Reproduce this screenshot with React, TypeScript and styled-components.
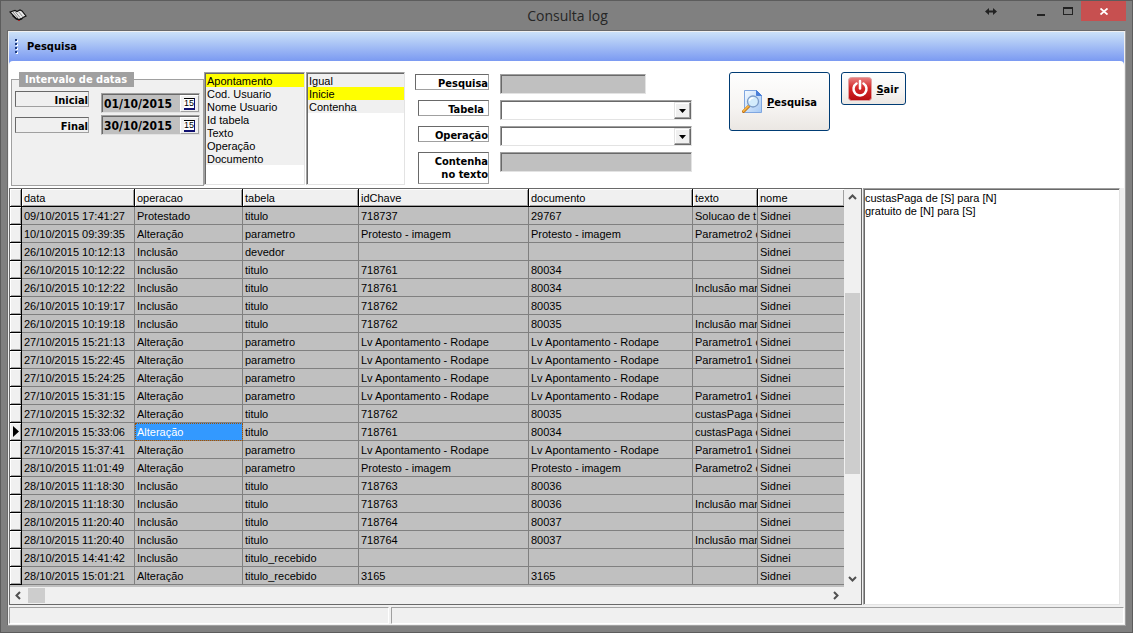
import React from 'react';
import styled, { createGlobalStyle, css } from 'styled-components';

const GlobalStyle = createGlobalStyle`
  * { box-sizing: border-box; }
  body {
    margin: 0;
    font-family: "Liberation Sans", Arial, sans-serif;
    font-size: 11px;
    line-height: 13px;
    color: #000;
  }
  button, input, select, textarea { font: inherit; color: inherit; margin: 0; }
`;

const boldText = css`
  font-family: "DejaVu Sans Condensed", "DejaVu Sans", sans-serif;
  font-weight: bold;
`;

const sunken = css`
  border: 1px solid;
  border-color: #a0a0a0 #e3e3e3 #e3e3e3 #a0a0a0;
  box-shadow: inset 1px 1px 0 #696969;
`;

const Window = styled.div`
  display: flex;
  flex-direction: column;
  min-height: 100vh;
  background: #808080;
  border: 1px solid #5c5c5c;
`;

const TitleBar = styled.header`
  display: grid;
  grid-template-columns: 1fr auto 1fr;
  height: 29px;
  padding: 0 6px 0 8px;
`;

const AppIcon = styled.div`
  padding-top: 8px;
`;

const Title = styled.h1`
  margin: 0;
  padding-top: 5px;
  font: 14px/20px "Open Sans", sans-serif;
  color: #262626;
`;

const WindowButtons = styled.div`
  display: flex;
  justify-content: flex-end;
  align-items: flex-start;
`;

const WindowButton = styled.button<{ $width: number; $close?: boolean }>`
  display: flex;
  align-items: center;
  justify-content: center;
  width: ${p => p.$width}px;
  height: 20px;
  padding: 0;
  border: 0;
  background: ${p => (p.$close ? '#c75050' : 'transparent')};
`;

const Client = styled.main`
  display: flex;
  flex-direction: column;
  flex: 1;
  margin: 0 6px 6px;
  padding: 1px;
  border: 1px solid #696969;
  border-right-color: #a0a0a0;
  border-bottom-color: #a0a0a0;
  background: #f0f0f0;
`;

const SearchSection = styled.section`
  background: #7b9ef2;
`;

const SectionHeader = styled.div`
  display: flex;
  align-items: center;
  gap: 9px;
  height: 29px;
  padding-left: 6px;
  background: linear-gradient(#cbe1f8, #7b9af2);
`;

const SectionTitle = styled.h2`
  ${boldText}
  margin: 0;
  font-size: 11px;
`;

const SearchPanel = styled.div`
  display: flex;
  align-items: flex-start;
  padding: 11px 2px 2px;
  border-radius: 4px 4px 0 0;
  background: #fff;
`;

const DateGroup = styled.fieldset`
  display: block;
  flex: none;
  width: 193px;
  height: 114px;
  min-width: 0;
  margin: 0;
  padding: 0 3px;
  border: 1px solid #a0a0a0;
  background: #f0f0f0;
`;

const DateLegend = styled.legend`
  ${boldText}
  margin-left: 4px;
  padding: 1px 7px 0 6px;
  font-size: 11px;
  line-height: 14px;
  color: #fff;
  background: #a0a0a0;
`;

const DateRows = styled.div`
  display: flex;
  justify-content: space-between;
  padding-top: 4px;
`;

const Column = styled.div<{ $gap: number; $top?: number }>`
  display: flex;
  flex-direction: column;
  gap: ${p => p.$gap}px;
  padding-top: ${p => p.$top ?? 0}px;
`;

const FieldLabel = styled.label<{ $width: number; $inset?: number; $lines?: number }>`
  ${boldText}
  justify-self: end;
  width: ${p => p.$width}px;
  height: ${p => (p.$lines === 2 ? 32 : 16)}px;
  padding: 2px ${p => p.$inset ?? 0}px 0 0;
  border: 1px solid;
  border-color: #696969 #a0a0a0 #a0a0a0 #696969;
  font-size: 11px;
  text-align: right;
`;

const DateBox = styled.div`
  ${sunken}
  display: flex;
  width: 99px;
  height: 20px;
  padding: 1px 0 0 1px;
  background: #c0c0c0;
`;

const DateInput = styled.input`
  ${boldText}
  flex: 1;
  min-width: 0;
  padding: 1px 0 0 1px;
  border: 0;
  outline: 0;
  background: transparent;
  font-size: 12px;
`;

const CalendarButton = styled.button`
  display: flex;
  align-items: center;
  justify-content: center;
  width: 19px;
  padding: 0;
  border: 1px solid;
  border-color: #fff #a0a0a0 #a0a0a0 #fff;
  background: #f0f0f0;
`;

const CalendarFace = styled.span`
  border-top: 1px solid #000;
  border-right: 1px solid #101070;
  border-bottom: 2px solid #101070;
  background: #fff;
  font-size: 9px;
  line-height: 9px;
`;

const ListBox = styled.select<{ $width: number }>`
  ${sunken}
  flex: none;
  width: ${p => p.$width}px;
  height: 113px;
  margin-right: 1px;
  padding: 1px 0 0 1px;
  border-radius: 0;
  outline: 0;
  overflow: hidden;
  background: #fff;

  option {
    height: 13px;
    min-height: 13px;
    padding: 1px 1px 0;
    line-height: 12px;
    color: #000;
    background: #f0f0f0;
  }
  option:checked {
    color: #000;
    background: #ff0 linear-gradient(#ff0, #ff0);
  }
`;

const FilterGrid = styled.div`
  display: grid;
  grid-template-columns: 74px 192px;
  grid-template-rows: 20px 20px 20px auto;
  column-gap: 11px;
  row-gap: 6px;
  align-items: start;
  margin: 2px 37px 0 9px;
`;

const FilterInput = styled.input<{ $width: number }>`
  ${sunken}
  width: ${p => p.$width}px;
  height: 20px;
  padding: 0 3px;
  outline: 0;
  border-radius: 0;
  background: #c0c0c0;
`;

const SelectBox = styled.div`
  position: relative;
  height: 20px;
`;

const FilterSelect = styled.select`
  ${sunken}
  appearance: none;
  width: 100%;
  height: 20px;
  border-radius: 0;
  outline: 0;
  background: #fff;
`;

const SelectArrow = styled.span`
  position: absolute;
  top: 2px;
  right: 1px;
  display: flex;
  align-items: center;
  justify-content: center;
  width: 17px;
  height: 17px;
  border: 1px solid;
  border-color: #e3e3e3 #696969 #696969 #e3e3e3;
  box-shadow: inset -1px -1px 0 #a0a0a0, inset 1px 1px 0 #fff;
  background: #f0f0f0;
  pointer-events: none;
`;

const ActionButton = styled.button<{ $large?: boolean }>`
  ${boldText}
  display: flex;
  flex: none;
  align-items: center;
  justify-content: center;
  gap: 4px;
  width: ${p => (p.$large ? 101 : 65)}px;
  height: ${p => (p.$large ? 59 : 33)}px;
  margin-right: 11px;
  padding: 0;
  border: 1px solid #003c74;
  border-radius: 3px;
  background: linear-gradient(#fefefe, #f6f4f2 60%, #ebe7e3);
  font-size: 11px;
`;

const ActionText = styled.span`
  padding-top: 2px;
`;

const Results = styled.section`
  display: grid;
  flex: 1;
  grid-template-columns: minmax(0, 853fr) minmax(0, 257fr);
  column-gap: 1px;
  padding-right: 4px;
`;

const GridPane = styled.div`
  display: grid;
  grid-template-columns: minmax(0, 1fr) 17px;
  grid-template-rows: 1fr 17px;
  min-width: 0;
  border: 1px solid #696969;
  background: #f0f0f0;
`;

const TableArea = styled.div`
  min-width: 0;
  padding-bottom: 2px;
  background: #c0c0c0;
`;

const Table = styled.table`
  width: 100%;
  table-layout: fixed;
  border-collapse: separate;
  border-spacing: 0;
`;

const Col = styled.col<{ $width?: number }>`
  width: ${p => (p.$width ? `${p.$width}px` : 'auto')};
`;

const HeadCell = styled.th<{ $last?: boolean }>`
  height: 18px;
  padding: 1px 2px 0;
  border-bottom: 1px solid #000;
  border-right: ${p => (p.$last ? '0' : '1px solid #000')};
  box-shadow: inset 1px 1px 0 #fff, inset -1px -1px 0 #a0a0a0;
  background: #f0f0f0;
  font-weight: normal;
  line-height: 16px;
  text-align: left;
`;

const MarkerCell = styled.th`
  height: 18px;
  padding: 0;
  border-right: 1px solid #000;
  border-bottom: 1px solid #000;
  box-shadow: inset 1px 1px 0 #fff, inset -1px -1px 0 #a0a0a0;
  background: #f0f0f0;
`;

const MarkerIcon = styled.svg`
  display: block;
  margin-left: 3px;
`;

const Cell = styled.td<{ $selected?: boolean; $last?: boolean }>`
  height: 18px;
  padding: 1px 0 0 2px;
  border-right: ${p => (p.$last ? '0' : '1px solid #808080')};
  border-bottom: 1px solid #808080;
  line-height: 16px;
  ${p =>
    p.$selected &&
    css`
      color: #fff;
      background: #3399ff;
      outline: 1px dotted #a05000;
      outline-offset: -1px;
    `}
`;

const CellText = styled.span`
  display: block;
  overflow: hidden;
  white-space: nowrap;
`;

const Scrollbar = styled.div<{ $vertical?: boolean }>`
  display: flex;
  flex-direction: ${p => (p.$vertical ? 'column' : 'row')};
  background: #f0f0f0;
`;

const ScrollButton = styled.button`
  display: flex;
  align-items: center;
  justify-content: center;
  width: 17px;
  height: 17px;
  padding: 0;
  border: 0;
  background: transparent;
`;

const Track = styled.div<{ $share: number }>`
  flex: ${p => p.$share} 1 0;
`;

const Thumb = styled.div<{ $share: number }>`
  flex: ${p => p.$share} 1 0;
  margin: 1px;
  background: #cdcdcd;
`;

const Detail = styled.textarea`
  ${sunken}
  width: 100%;
  height: 100%;
  padding: 3px 1px;
  border-radius: 0;
  outline: 0;
  resize: none;
  background: #fff;
`;

const StatusBar = styled.footer`
  display: flex;
  gap: 2px;
  height: 19px;
  padding-top: 2px;
`;

const StatusPanel = styled.div<{ $width?: number }>`
  flex: ${p => (p.$width ? `0 0 ${p.$width}px` : '1')};
  border: 1px solid;
  border-color: #a0a0a0 #fff #fff #a0a0a0;
`;

const columns: { name: string; width?: number }[] = [
  { name: 'data', width: 113 },
  { name: 'operacao', width: 108 },
  { name: 'tabela', width: 116 },
  { name: 'idChave', width: 170 },
  { name: 'documento', width: 164 },
  { name: 'texto', width: 65 },
  { name: 'nome' },
];

const rodape = 'Lv Apontamento - Rodape';
const imagem = 'Protesto - imagem';

const rows: string[][] = [
  ['09/10/2015 17:41:27', 'Protestado', 'titulo', '718737', '29767', 'Solucao de t'],
  ['10/10/2015 09:39:35', 'Alteração', 'parametro', imagem, imagem, 'Parametro2 c'],
  ['26/10/2015 10:12:13', 'Inclusão', 'devedor', '', '', ''],
  ['26/10/2015 10:12:22', 'Inclusão', 'titulo', '718761', '80034', ''],
  ['26/10/2015 10:12:22', 'Inclusão', 'titulo', '718761', '80034', 'Inclusão mar'],
  ['26/10/2015 10:19:17', 'Inclusão', 'titulo', '718762', '80035', ''],
  ['26/10/2015 10:19:18', 'Inclusão', 'titulo', '718762', '80035', 'Inclusão mar'],
  ['27/10/2015 15:21:13', 'Alteração', 'parametro', rodape, rodape, 'Parametro1 c'],
  ['27/10/2015 15:22:45', 'Alteração', 'parametro', rodape, rodape, 'Parametro1 c'],
  ['27/10/2015 15:24:25', 'Alteração', 'parametro', rodape, rodape, ''],
  ['27/10/2015 15:31:15', 'Alteração', 'parametro', rodape, rodape, 'Parametro1 c'],
  ['27/10/2015 15:32:32', 'Alteração', 'titulo', '718762', '80035', 'custasPaga c'],
  ['27/10/2015 15:33:06', 'Alteração', 'titulo', '718761', '80034', 'custasPaga c'],
  ['27/10/2015 15:37:41', 'Alteração', 'parametro', rodape, rodape, 'Parametro1 c'],
  ['28/10/2015 11:01:49', 'Alteração', 'parametro', imagem, imagem, 'Parametro2 c'],
  ['28/10/2015 11:18:30', 'Inclusão', 'titulo', '718763', '80036', ''],
  ['28/10/2015 11:18:30', 'Inclusão', 'titulo', '718763', '80036', 'Inclusão mar'],
  ['28/10/2015 11:20:40', 'Inclusão', 'titulo', '718764', '80037', ''],
  ['28/10/2015 11:20:40', 'Inclusão', 'titulo', '718764', '80037', 'Inclusão mar'],
  ['28/10/2015 14:41:42', 'Inclusão', 'titulo_recebido', '', '', ''],
  ['28/10/2015 15:01:21', 'Alteração', 'titulo_recebido', '3165', '3165', ''],
].map(r => [...r, 'Sidnei']);

const currentRow = 12;

const BookIcon = () => (
  <svg width="18" height="13" viewBox="0 0 18 13" aria-hidden="true">
    <path d="M1 3l5-1.500 2 1 3-1.500 2 1 4 5-3 1.500-1 1-3 1-3-1z" fill="#e8e8e8" stroke="#111" strokeWidth="1.200" />
    <path d="M4 3l5 6M6 2.500l5 6M9.500 2.500l4 5" stroke="#888" strokeWidth="1" fill="none" />
    <path d="M3.500 6.500l3.500 3 3 1.500 3-1.500" stroke="#111" strokeWidth="1.500" fill="none" />
    <path d="M9 11.500h2" stroke="#a02020" />
  </svg>
);

const Grip = () => (
  <svg width="3" height="15" viewBox="0 0 3 15" aria-hidden="true">
    {[0, 4, 8, 12].map(y => (
      <g key={y}>
        <rect x="1" y={y + 1} width="2" height="2" fill="#fff" />
        <rect x="0" y={y} width="2" height="2" fill="#1c3c80" />
      </g>
    ))}
  </svg>
);

const MagnifierIcon = () => (
  <svg width="21" height="24" viewBox="0 0 21 24" aria-hidden="true">
    <defs>
      <linearGradient id="sheet" x1="0" y1="0" x2="1" y2="1">
        <stop offset="0" stopColor="#f4faff" />
        <stop offset="1" stopColor="#a4c8f4" />
      </linearGradient>
    </defs>
    <path d="M2.500 .5h12l5 5v17h-17z" fill="url(#sheet)" stroke="#7fa6e0" />
    <path d="M14.500 .5v5h5z" fill="#4a7fd8" stroke="#4a7fd8" />
    <path d="M1.500 21.500l5.500-5.500" stroke="#b86a10" strokeWidth="3" strokeLinecap="round" />
    <path d="M1.500 21l5-5" stroke="#f4b040" strokeWidth="2" strokeLinecap="round" />
    <circle cx="11" cy="11.500" r="5.500" fill="#d4ecfc" stroke="#7c9cc8" strokeWidth="1.300" />
    <path d="M7.500 11a3.500 3.500 0 0 1 4-3" stroke="#fff" strokeWidth="1.500" fill="none" />
  </svg>
);

const PowerIcon = () => (
  <svg width="24" height="24" viewBox="0 0 24 24" aria-hidden="true">
    <defs>
      <linearGradient id="power" x1="0" y1="0" x2="0" y2="1">
        <stop offset="0" stopColor="#e88080" />
        <stop offset=".45" stopColor="#d42a2a" />
        <stop offset="1" stopColor="#b80c10" />
      </linearGradient>
    </defs>
    <rect x=".5" y=".5" width="23" height="23" rx="3" fill="url(#power)" stroke="#e0a0a0" />
    <path d="M8.500 6.500a6.500 6.500 0 1 0 7 0" stroke="#fff" strokeWidth="2.500" fill="none" strokeLinecap="round" />
    <path d="M12 4v7.500" stroke="#fff" strokeWidth="2.500" strokeLinecap="round" />
  </svg>
);

const Chevron = ({ angle }: { angle: number }) => (
  <svg width="9" height="9" viewBox="0 0 9 9" aria-hidden="true">
    <path d="M1 6l3.500-3.500L8 6" transform={`rotate(${angle} 4.5 4.5)`} fill="none" stroke="#505050" strokeWidth="2" />
  </svg>
);

const DropArrow = () => (
  <svg width="7" height="4" viewBox="0 0 7 4" aria-hidden="true">
    <path d="M0 0h7L3.500 4z" fill="#000" />
  </svg>
);

const DateField = ({ id, value }: { id: string; value: string }) => (
  <DateBox>
    <DateInput id={id} defaultValue={value} />
    <CalendarButton type="button" aria-label="Calendário">
      <CalendarFace>15</CalendarFace>
    </CalendarButton>
  </DateBox>
);

const ComboBox = ({ id }: { id: string }) => (
  <SelectBox>
    <FilterSelect id={id}>
      <option value="" />
    </FilterSelect>
    <SelectArrow>
      <DropArrow />
    </SelectArrow>
  </SelectBox>
);

const OptionList = ({ label, width, selected, options }: { label: string; width: number; selected: string; options: string[] }) => (
  <ListBox aria-label={label} $width={width} size={8} defaultValue={selected}>
    {options.map(o => (
      <option key={o}>{o}</option>
    ))}
  </ListBox>
);

export default function App() {
  return (
    <>
      <GlobalStyle />
      <Window>
        <TitleBar>
          <AppIcon>
            <BookIcon />
          </AppIcon>
          <Title>Consulta log</Title>
          <WindowButtons>
            <WindowButton $width={72} aria-label="Redimensionar">
              <svg width="12" height="7" viewBox="0 0 12 7">
                <path d="M0 3.500L4 0v2.500h4V0l4 3.500L8 7V4.500H4V7z" fill="#222" />
              </svg>
            </WindowButton>
            <WindowButton $width={28} aria-label="Minimizar">
              <svg width="8" height="9" viewBox="0 0 8 9">
                <path d="M0 7h8v2H0z" fill="#222" />
              </svg>
            </WindowButton>
            <WindowButton $width={26} aria-label="Maximizar">
              <svg width="10" height="8" viewBox="0 0 10 8">
                <path d="M0 0h10v8H0zM1 2v5h8V2z" fill="#222" fillRule="evenodd" />
              </svg>
            </WindowButton>
            <WindowButton $width={45} $close aria-label="Fechar">
              <svg width="8" height="7" viewBox="0 0 8 7">
                <path d="M.5 .5l7 6M7.500 .5l-7 6" stroke="#fff" strokeWidth="1.800" />
              </svg>
            </WindowButton>
          </WindowButtons>
        </TitleBar>

        <Client>
          <SearchSection>
            <SectionHeader>
              <Grip />
              <SectionTitle>Pesquisa</SectionTitle>
            </SectionHeader>
            <SearchPanel>
              <DateGroup>
                <DateLegend>Intervalo de datas</DateLegend>
                <DateRows>
                  <Column $gap={10}>
                    <FieldLabel htmlFor="inicial" $width={74}>Inicial</FieldLabel>
                    <FieldLabel htmlFor="final" $width={74}>Final</FieldLabel>
                  </Column>
                  <Column $gap={2} $top={2}>
                    <DateField id="inicial" value="01/10/2015" />
                    <DateField id="final" value="30/10/2015" />
                  </Column>
                </DateRows>
              </DateGroup>
              <OptionList
                label="Campo"
                width={101}
                selected="Apontamento"
                options={['Apontamento', 'Cod. Usuario', 'Nome Usuario', 'Id tabela', 'Texto', 'Operação', 'Documento']}
              />
              <OptionList label="Critério" width={99} selected="Inicie" options={['Igual', 'Inicie', 'Contenha']} />
              <FilterGrid>
                <FieldLabel htmlFor="pesquisa" $width={74}>Pesquisa</FieldLabel>
                <FilterInput id="pesquisa" $width={146} />
                <FieldLabel htmlFor="tabela" $width={71} $inset={4}>Tabela</FieldLabel>
                <ComboBox id="tabela" />
                <FieldLabel htmlFor="operacao" $width={71}>Operação</FieldLabel>
                <ComboBox id="operacao" />
                <FieldLabel htmlFor="contenha" $width={71} $lines={2}>Contenha no texto</FieldLabel>
                <FilterInput id="contenha" $width={192} />
              </FilterGrid>
              <ActionButton type="button" $large>
                <MagnifierIcon />
                <ActionText><u>P</u>esquisa</ActionText>
              </ActionButton>
              <ActionButton type="button">
                <PowerIcon />
                <ActionText><u>S</u>air</ActionText>
              </ActionButton>
            </SearchPanel>
          </SearchSection>

          <Results>
            <GridPane>
              <TableArea>
                <Table>
                  <colgroup>
                    <Col $width={12} />
                    {columns.map(c => <Col key={c.name} $width={c.width} />)}
                  </colgroup>
                  <thead>
                    <tr>
                      <MarkerCell />
                      {columns.map(c => (
                        <HeadCell key={c.name} scope="col" $last={!c.width}>{c.name}</HeadCell>
                      ))}
                    </tr>
                  </thead>
                  <tbody>
                    {rows.map((row, r) => (
                      <tr key={r}>
                        <MarkerCell scope="row">
                          {r === currentRow && (
                            <MarkerIcon width="6" height="11" viewBox="0 0 6 11">
                              <path d="M0 0l6 5.500L0 11z" fill="#000" />
                            </MarkerIcon>
                          )}
                        </MarkerCell>
                        {row.map((value, c) => (
                          <Cell key={c} $selected={r === currentRow && c === 1} $last={c === row.length - 1}>
                            <CellText>{value}</CellText>
                          </Cell>
                        ))}
                      </tr>
                    ))}
                  </tbody>
                </Table>
              </TableArea>
              <Scrollbar $vertical>
                <ScrollButton aria-label="Acima"><Chevron angle={0} /></ScrollButton>
                <Track $share={86} />
                <Thumb $share={182} />
                <Track $share={95} />
                <ScrollButton aria-label="Abaixo"><Chevron angle={180} /></ScrollButton>
              </Scrollbar>
              <Scrollbar>
                <ScrollButton aria-label="Esquerda"><Chevron angle={-90} /></ScrollButton>
                <Thumb $share={17} />
                <Track $share={781} />
                <ScrollButton aria-label="Direita"><Chevron angle={90} /></ScrollButton>
              </Scrollbar>
            </GridPane>
            <Detail
              aria-label="Detalhe"
              defaultValue={'custasPaga de [S] para [N]\ngratuito de [N] para [S]'}
            />
          </Results>

          <StatusBar>
            <StatusPanel $width={380} />
            <StatusPanel />
          </StatusBar>
        </Client>
      </Window>
    </>
  );
}
